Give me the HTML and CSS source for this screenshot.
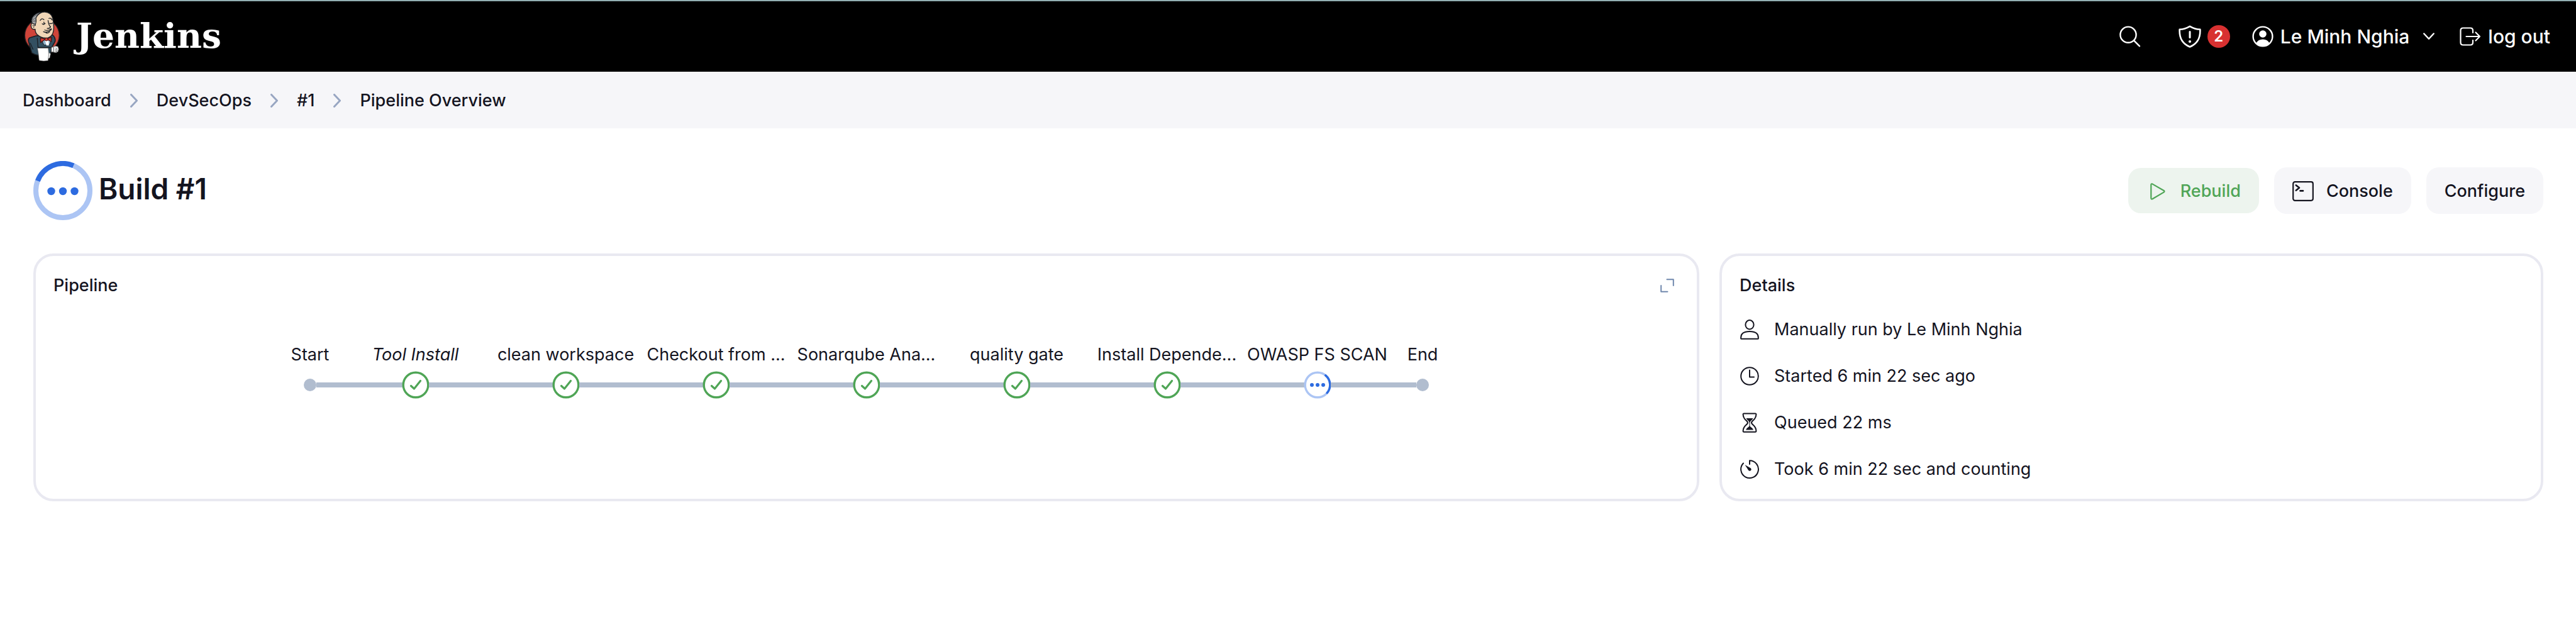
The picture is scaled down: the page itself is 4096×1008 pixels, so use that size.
FILE: index.html
```html
<!DOCTYPE html>
<html lang="en">
<head>
<meta charset="utf-8">
<title>Build #1 - Pipeline Overview - Jenkins</title>
<link rel="stylesheet" href="styles.css">
</head>
<body>
<svg class="sprite" aria-hidden="true">
  <symbol id="chevron" viewBox="0 0 12 22"><path d="M1.500 1.500L10.500 11L1.500 20.500" fill="none" stroke="currentColor" stroke-width="3" stroke-linecap="round" stroke-linejoin="round"/></symbol>
  <symbol id="success" viewBox="0 0 44 44"><circle cx="22" cy="22" r="19.800" fill="#fff" stroke="currentColor" stroke-width="3.400"/><path d="M14.500 23.500L19.500 28L29.500 15.500" fill="none" stroke="currentColor" stroke-width="3.200" stroke-linecap="round" stroke-linejoin="round"/></symbol>
</svg>

<header class="header">
  <a class="brand" href="#">
    <svg class="brand-logo" viewBox="54 52 172 242" aria-hidden="true">
      <ellipse cx="141" cy="168" rx="83" ry="80" fill="#cf4439" stroke="#2a2020" stroke-width="4"/>
      <path d="M112 170L80 180Q74 186 76 196L92 252Q108 262 126 264L180 262L190 222L204 196Q206 178 192 166Z" fill="#335061" stroke="#1b1f24" stroke-width="5" stroke-linejoin="round"/>
      <path d="M84 204L98 236M118 180L122 228" fill="none" stroke="#1b1f24" stroke-width="4"/>
      <path d="M134 180L150 214L176 214L190 178Z" fill="#8fb3cc" stroke="#1b1f24" stroke-width="3"/>
      <path d="M156 194L162 216L174 216L172 192Z" fill="#fff"/>
      <path d="M112 82Q128 54 154 55Q184 56 192 84Q200 118 196 146Q192 172 168 180Q140 184 118 164Q108 154 108 138Q90 142 88 122Q88 108 98 106Z" fill="#f0d6b7" stroke="#1b1f24" stroke-width="4" stroke-linejoin="round"/>
      <path d="M94 110Q86 98 94 82Q108 60 136 56Q118 66 112 84Q116 98 108 122Q104 110 94 110Z" fill="#76797d" stroke="#1b1f24" stroke-width="3" stroke-linejoin="round"/>
      <path d="M100 96L108 90M96 104L110 106M98 86L112 76" stroke="#c9c9c9" stroke-width="3"/>
      <path d="M94 122Q98 114 104 122Q98 124 102 132" fill="none" stroke="#1b1f24" stroke-width="3"/>
      <path d="M132 96Q140 82 150 92M174 86Q184 82 190 94M142 112Q148 118 156 110M150 104L151 113M178 110Q184 114 192 108M170 96Q174 122 182 126Q178 136 166 134M148 150Q164 158 186 140M154 142Q168 148 186 136M160 155Q170 160 178 150" fill="none" stroke="#1b1f24" stroke-width="4" stroke-linecap="round" stroke-linejoin="round"/>
      <path d="M134 180L158 186L134 202Z M184 176L164 186L186 198Z" fill="#d33833" stroke="#4a1512" stroke-width="4" stroke-linejoin="round"/>
      <circle cx="162" cy="187" r="7" fill="#d33833" stroke="#4a1512" stroke-width="3"/>
      <path d="M122 226L190 226" stroke="#1b1f24" stroke-width="5"/>
      <path d="M172 250L182 256L178 276L170 280Z" fill="#fff" stroke="#777" stroke-width="2"/>
      <path d="M119 229L171 229Q176 260 170 289Q148 294 127 288Q124 256 119 229Z" fill="#fff" stroke="#555" stroke-width="2"/>
      <path d="M186 226L196 222Q206 216 218 222Q224 234 218 246Q206 254 196 248L186 248Z" fill="#fff" stroke="#555" stroke-width="3"/>
      <path d="M197 224V246M206 228L214 232M204 236L216 239M204 243L213 245" fill="none" stroke="#555" stroke-width="3"/>
    </svg>
    <span class="brand-name">Jenkins</span>
  </a>
  <nav class="header-nav" aria-label="User">
    <button class="icon-button" type="button" aria-label="Search">
      <svg width="34" height="34" viewBox="0 0 34 34" fill="none" stroke="currentColor" stroke-width="2.400" stroke-linecap="round"><circle cx="14" cy="14.200" r="12.600"/><path d="M23 23.300L32 32.300"/></svg>
    </button>
    <a class="security" href="#" aria-label="Security warnings: 2">
      <svg width="36" height="36" viewBox="0 0 36 36" fill="none" stroke="currentColor" stroke-width="2.600" stroke-linecap="round" stroke-linejoin="round"><path d="M18 1.800Q10 6.500 1.700 6.800Q1.200 18 5.500 24.500Q9.500 31 18 34.500Q26.500 31 30.500 24.500Q34.800 18 34.300 6.800Q26 6.500 18 1.800Z"/><path d="M18 10.500V19.500" stroke-width="3"/><circle cx="18" cy="26" r="1.100" fill="currentColor" stroke-width="2"/></svg>
      <span class="badge">2</span>
    </a>
    <a class="user" href="#">
      <svg width="34" height="34" viewBox="0 0 34 34"><circle cx="17" cy="17" r="15.400" fill="none" stroke="currentColor" stroke-width="2.400"/><circle cx="17" cy="13" r="5.800" fill="currentColor"/><path d="M6.500 27.500Q9.500 21.500 17 21.500Q24.500 21.500 27.500 27.500Q23 32 17 32Q11 32 6.500 27.500Z" fill="currentColor"/></svg>
      Le Minh Nghia
    </a>
    <button class="icon-button user-menu" type="button" aria-label="User menu">
      <svg width="18" height="12" viewBox="0 0 18 12" fill="none" stroke="currentColor" stroke-width="2.400" stroke-linecap="round" stroke-linejoin="round"><path d="M1.300 1.500L9 9.800L16.700 1.500"/></svg>
    </button>
    <a class="logout" href="#">
      <svg width="34" height="30" viewBox="0 0 34 30" fill="none" stroke="currentColor" stroke-width="2.200" stroke-linecap="round" stroke-linejoin="round"><path d="M21 9V5.500Q21 1.500 17 1.500H5.500Q1.500 1.500 1.500 5.500V24.500Q1.500 28.500 5.500 28.500H17Q21 28.500 21 24.500V21"/><path d="M10.500 15H32M25.500 8.500L32 15L25.500 21.500"/></svg>
      log out
    </a>
  </nav>
</header>

<nav class="crumbs" aria-label="Breadcrumb">
  <a href="#">Dashboard</a>
  <svg class="crumb-chevron" aria-hidden="true"><use href="#chevron"/></svg>
  <a href="#">DevSecOps</a>
  <svg class="crumb-chevron" aria-hidden="true"><use href="#chevron"/></svg>
  <a href="#">#1</a>
  <svg class="crumb-chevron" aria-hidden="true"><use href="#chevron"/></svg>
  <a href="#">Pipeline Overview</a>
</nav>

<main class="main">
  <div class="app-bar">
    <div class="build">
      <svg class="build-status" viewBox="0 0 94 94" role="img" aria-label="In progress">
        <circle cx="47" cy="47" r="43" fill="none" stroke="#acc5f4" stroke-width="8"/>
        <path d="M63.800 7.400A43 43 0 0 0 6.900 31.600" fill="none" stroke="#2d6be0" stroke-width="8"/>
        <g fill="#2d6be0"><circle cx="28.500" cy="48" r="6.200"/><circle cx="47" cy="48" r="6.200"/><circle cx="65.500" cy="48" r="6.200"/></g>
      </svg>
      <h1 class="build-title">Build #1</h1>
    </div>
    <div class="actions">
      <button class="button button-rebuild" type="button">
        <svg width="24" height="27" viewBox="0 0 24 27" fill="none" stroke="currentColor" stroke-width="2.200" stroke-linejoin="round"><path d="M1.300 3Q1.300 0.500 3.600 1.600L21.600 12Q23.400 13.300 21.600 14.600L3.600 25.200Q1.300 26.300 1.300 23.800Z"/></svg>
        Rebuild
      </button>
      <button class="button" type="button">
        <svg width="34" height="32" viewBox="0 0 34 32" fill="none" stroke="currentColor" stroke-linecap="round" stroke-linejoin="round"><rect x="1.200" y="1.200" width="31.600" height="29.600" rx="3" stroke-width="2.200"/><path d="M5.800 6.400L11 10.600L5.800 14.800M12.500 15.400H17" stroke-width="2.600"/></svg>
        Console
      </button>
      <button class="button" type="button">Configure</button>
    </div>
  </div>

  <div class="cards">
    <section class="card">
      <div class="card-head">
        <h2 class="card-title">Pipeline</h2>
        <button class="icon-button expand" type="button" aria-label="Expand pipeline">
          <svg width="22" height="22" viewBox="0 0 22 22" fill="none" stroke="currentColor" stroke-width="2" stroke-linecap="round" stroke-linejoin="round"><path d="M10.500 1.200H20.800V11M1.200 11V20.800H11.500"/></svg>
        </button>
      </div>
      <ol class="graph">
        <li class="stage"><span class="stage-name">Start</span><span class="track"><i class="line line-none"></i><i class="dot"></i><i class="line"></i></span></li>
        <li class="stage"><em class="stage-name">Tool Install</em><span class="track"><i class="line"></i><svg class="node"><use href="#success"/></svg><i class="line"></i></span></li>
        <li class="stage"><span class="stage-name">clean workspace</span><span class="track"><i class="line"></i><svg class="node"><use href="#success"/></svg><i class="line"></i></span></li>
        <li class="stage"><span class="stage-name">Checkout from ...</span><span class="track"><i class="line"></i><svg class="node"><use href="#success"/></svg><i class="line"></i></span></li>
        <li class="stage"><span class="stage-name">Sonarqube Ana...</span><span class="track"><i class="line"></i><svg class="node"><use href="#success"/></svg><i class="line"></i></span></li>
        <li class="stage"><span class="stage-name">quality gate</span><span class="track"><i class="line"></i><svg class="node"><use href="#success"/></svg><i class="line"></i></span></li>
        <li class="stage"><span class="stage-name">Install Depende...</span><span class="track"><i class="line"></i><svg class="node"><use href="#success"/></svg><i class="line"></i></span></li>
        <li class="stage"><span class="stage-name">OWASP FS SCAN</span><span class="track"><i class="line"></i>
          <svg class="node" viewBox="0 0 44 44"><circle cx="22" cy="22" r="19.800" fill="#fff" stroke="#acc5f4" stroke-width="3.400"/><path d="M34.800 6.900A19.800 19.800 0 0 1 37.200 34.700" fill="none" stroke="#2d6be0" stroke-width="3.400" stroke-linecap="round"/><g fill="#2d6be0"><circle cx="13" cy="22" r="3"/><circle cx="22" cy="22" r="3"/><circle cx="31" cy="22" r="3"/></g></svg>
          <i class="line"></i></span></li>
        <li class="stage"><span class="stage-name">End</span><span class="track"><i class="line"></i><i class="dot"></i><i class="line line-none"></i></span></li>
      </ol>
    </section>

    <section class="card">
      <div class="card-head"><h2 class="card-title">Details</h2></div>
      <ul class="details">
        <li class="detail">
          <svg class="detail-icon" viewBox="0 0 32 32"><ellipse cx="16" cy="8.300" rx="6.600" ry="7.200"/><path d="M2.200 30.300Q1.200 19 16 19Q30.800 19 29.800 30.300Q29.700 30.800 29 30.800H3Q2.300 30.800 2.200 30.300Z"/></svg>
          Manually run by Le Minh Nghia
        </li>
        <li class="detail">
          <svg class="detail-icon" viewBox="0 0 32 32"><circle cx="16" cy="16" r="13.800"/><path d="M16 6.500V17.500H23"/></svg>
          Started 6 min 22 sec ago
        </li>
        <li class="detail">
          <svg class="detail-icon" viewBox="0 0 32 32"><path d="M7 1.500H25Q26.500 1.500 26.400 3Q26 8.500 22 12Q19 14.500 19 16Q19 17.500 22 20Q26 23.500 26.400 29Q26.500 30.700 25 30.700H7Q5.500 30.700 5.600 29Q6 23.500 10 20Q13 17.500 13 16Q13 14.500 10 12Q6 8.500 5.600 3Q5.500 1.500 7 1.500Z"/><path class="solid" d="M10.500 9H21.500Q20.500 11 18.500 12.500Q16.500 14 16.500 16V21Q16.500 22 18 23Q21 24.500 22 27.500H10Q11 24.500 14 23Q15.500 22 15.500 21V16Q15.500 14 13.500 12.500Q11.500 11 10.500 9Z"/></svg>
          Queued 22 ms
        </li>
        <li class="detail">
          <svg class="detail-icon" viewBox="0 0 32 32"><path d="M16 8V2.200A13.900 13.900 0 1 1 6 6.500"/><path class="solid" d="M8.500 9L18 14.500Q19.500 16.500 18 18Q16 19.500 14.300 18Z"/></svg>
          Took 6 min 22 sec and counting
        </li>
      </ul>
    </section>
  </div>
</main>
</body>
</html>
```
FILE: styles.css
```css
:root {
  --text: #14141f;
  --line: #b1bdcf;
  --border: #e9e9f1;
  --green: #4fa556;
  --surface: #f6f6f9;
}

* {
  box-sizing: border-box;
}

body {
  margin: 0;
  background: #fff;
  color: var(--text);
  font: 400 27px/40px Inter, "Liberation Sans", sans-serif;
}

a {
  color: inherit;
  text-decoration: none;
}

button {
  padding: 0;
  border: 0;
  background: none;
  color: inherit;
  font: inherit;
}

svg {
  display: block;
  flex: none;
}

ol,
ul {
  margin: 0;
  padding: 0;
  list-style: none;
}

.sprite {
  display: none;
}

.header {
  display: flex;
  align-items: center;
  justify-content: space-between;
  height: 114px;
  padding: 0 41px 0 38px;
  border-top: 2px solid #93b0b3;
  background: #000;
  color: #fff;
  font-size: 30px;
  font-weight: 500;
}

.brand {
  display: flex;
  align-items: center;
  gap: 26px;
}

.brand-logo {
  width: 57px;
  height: 80px;
}

.brand-name {
  padding-bottom: 2px;
  font: 700 55px/64px "DejaVu Serif", serif;
}

.header-nav,
.security,
.user,
.logout {
  display: flex;
  align-items: center;
}

.security {
  gap: 10px;
  margin: 0 35px 0 60px;
}

.badge {
  width: 36px;
  border-radius: 18px;
  background: #d83131;
  font-size: 24px;
  font-weight: 600;
  line-height: 36px;
  text-align: center;
}

.user,
.logout {
  gap: 11px;
}

.user-menu {
  margin: 0 40px 0 22px;
}

.crumbs {
  display: flex;
  align-items: center;
  gap: 30px;
  height: 90px;
  padding: 2px 36px 0;
  background: var(--surface);
  font-weight: 500;
}

.crumb-chevron {
  width: 12px;
  height: 22px;
  color: #98a6c2;
}

.main {
  padding: 52px 52px 0 53px;
}

.app-bar {
  display: flex;
  align-items: center;
  justify-content: space-between;
  margin-bottom: 53px;
}

.build {
  display: flex;
  align-items: center;
  gap: 10px;
}

.build-status {
  width: 94px;
  height: 94px;
}

.build-title {
  margin: 0;
  padding-bottom: 6px;
  font-size: 46px;
  font-weight: 600;
  line-height: 56px;
}

.actions {
  display: flex;
  align-items: center;
  gap: 24px;
}

.button {
  display: flex;
  align-items: center;
  gap: 20px;
  height: 74px;
  padding: 2px 29px 0;
  border-radius: 20px;
  background: var(--surface);
  font-weight: 500;
}

.button-rebuild {
  gap: 24px;
  height: 72px;
  padding-left: 35px;
  background: #edf4ee;
  color: var(--green);
}

.cards {
  display: grid;
  grid-template-columns: 91fr 45fr;
  gap: 32px;
}

.card {
  padding: 27px 28px 10px;
  border: 4px solid var(--border);
  border-radius: 32px;
}

.card-head {
  display: flex;
  align-items: center;
  justify-content: space-between;
}

.card-title {
  margin: 0;
  font-size: 27px;
  font-weight: 500;
}

.expand {
  margin-right: 8px;
  color: #7088ad;
}

.graph {
  display: grid;
  grid-template-columns: 96px repeat(7, 239px) 96px;
  justify-content: center;
  margin-top: 70px;
}

.stage {
  display: flex;
  flex-direction: column;
  gap: 6px;
}

.stage-name {
  text-align: center;
  white-space: nowrap;
}

.track {
  display: flex;
  align-items: center;
  height: 44px;
}

.line {
  flex: 1;
  height: 8px;
  background: var(--line);
}

.line-none {
  background: none;
}

.dot {
  width: 20px;
  height: 20px;
  border-radius: 50%;
  background: var(--line);
}

.node {
  width: 44px;
  height: 44px;
  margin: 0 -1px;
  color: var(--green);
}

.details {
  margin-top: 13px;
}

.detail {
  display: flex;
  align-items: center;
  gap: 23px;
  height: 74px;
}

.detail-icon {
  width: 32px;
  height: 32px;
  fill: none;
  stroke: currentColor;
  stroke-width: 2;
  stroke-linecap: round;
  stroke-linejoin: round;
}

.detail-icon .solid {
  fill: currentColor;
  stroke: none;
}
```
